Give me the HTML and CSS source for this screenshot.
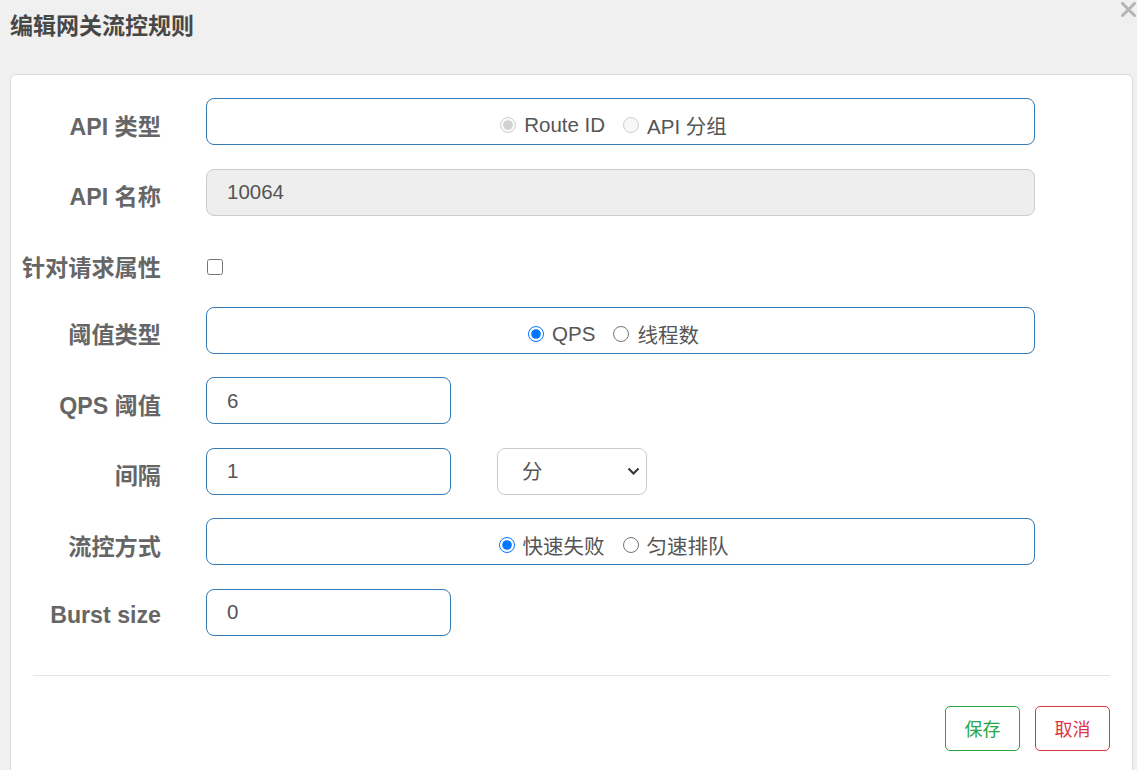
FILE: index.html
```html
<!DOCTYPE html>
<html lang="zh-CN">
<head>
<meta charset="utf-8">
<title>编辑网关流控规则</title>
<link rel="stylesheet" href="styles.css">
</head>
<body>
<div class="header">
  <h1 class="title">编辑网关流控规则</h1>
  <button class="close" type="button" aria-label="关闭">
    <svg width="15" height="15" viewBox="0 0 15 15"><path d="M1.5 1.5 L13.5 13.5 M13.5 1.5 L1.5 13.5" stroke="#b5b5b5" stroke-width="3" stroke-linecap="square"/></svg>
  </button>
</div>
<div class="card">
  <form class="form">
    <label class="lbl">API 类型</label>
    <div class="box radios">
      <label class="opt disabled"><input type="radio" name="apiType" checked disabled><span>Route ID</span></label>
      <label class="opt disabled"><input type="radio" name="apiType" disabled><span>API 分组</span></label>
    </div>

    <label class="lbl">API 名称</label>
    <input class="box input disabled-input" type="text" value="10064" disabled>

    <label class="lbl lbl-check">针对请求属性</label>
    <div class="check-wrap"><input class="check" type="checkbox"></div>

    <label class="lbl">阈值类型</label>
    <div class="box radios">
      <label class="opt"><input type="radio" name="grade" checked><span>QPS</span></label>
      <label class="opt"><input type="radio" name="grade"><span>线程数</span></label>
    </div>

    <label class="lbl">QPS 阈值</label>
    <div class="line"><input class="box input short" type="text" value="6"></div>

    <label class="lbl">间隔</label>
    <div class="line">
      <input class="box input short" type="text" value="1">
      <div class="select-wrap">
        <select class="select">
          <option>秒</option>
          <option selected>分</option>
          <option>时</option>
          <option>天</option>
        </select>
        <svg class="chev" width="13" height="9" viewBox="0 0 13 9"><path d="M1.5 1.5 L6.5 6.5 L11.5 1.5" fill="none" stroke="#333" stroke-width="2"/></svg>
      </div>
    </div>

    <label class="lbl">流控方式</label>
    <div class="box radios">
      <label class="opt"><input type="radio" name="behavior" checked><span>快速失败</span></label>
      <label class="opt"><input type="radio" name="behavior"><span>匀速排队</span></label>
    </div>

    <label class="lbl">Burst size</label>
    <div class="line"><input class="box input short" type="text" value="0"></div>
  </form>
  <div class="footer">
    <button class="btn btn-save" type="button">保存</button>
    <button class="btn btn-cancel" type="button">取消</button>
  </div>
</div>
</body>
</html>
```

FILE: styles.css
```css
html, body {
  margin: 0;
  padding: 0;
  background: #f0f0f0;
  height: 770px;
  overflow: hidden;
  font-family: "Liberation Sans", "Noto Sans CJK SC", sans-serif;
}

.header {
  height: 74px;
  display: flex;
  justify-content: space-between;
  align-items: flex-start;
  padding-left: 10px;
  box-sizing: border-box;
}

.title {
  margin: 11px 0 0;
  font-size: 23px;
  line-height: 30px;
  font-weight: bold;
  color: #474747;
}

.close {
  margin: 2px 1px 0 0;
  padding: 0;
  border: 0;
  background: none;
  width: 15px;
  height: 15px;
  display: flex;
}

.card {
  margin-left: 10px;
  width: 1123px;
  height: 760px;
  box-sizing: border-box;
  background: #fff;
  border: 1px solid #dcdcdc;
  border-radius: 6px;
}

.form {
  display: grid;
  grid-template-columns: 150px 829px;
  column-gap: 45px;
  row-gap: 23.5px;
  padding-top: 23px;
  align-items: center;
}

.lbl {
  text-align: right;
  font-size: 23.2px;
  font-weight: bold;
  color: #666;
  padding-top: 6px;
  white-space: nowrap;
}

.lbl-check {
  padding-top: 10px;
}

.box {
  box-sizing: border-box;
  height: 47px;
  border: 1px solid #337ab7;
  border-radius: 8px;
  background: #fff;
  font-family: inherit;
  font-size: 20.5px;
  color: #555;
}

.radios {
  display: flex;
  justify-content: center;
  align-items: center;
  gap: 18px;
  padding-top: 7px;
  padding-right: 14px;
}

.opt {
  display: flex;
  align-items: center;
  gap: 8px;
  color: #555;
}

.opt input {
  width: 16px;
  height: 16px;
  margin: 0;
}

.opt.disabled span {
  color: #555;
}

.input {
  width: 100%;
  padding: 0 20px;
  outline: none;
}

.disabled-input {
  background: #eee;
  border-color: #ccc;
}

.check-wrap {
  height: 44px;
  display: flex;
  align-items: center;
  padding-top: 12px;
  box-sizing: border-box;
}

.check {
  width: 16px;
  height: 16px;
  margin: 0 0 0 1px;
}

.line {
  display: flex;
  align-items: center;
  gap: 46px;
}

.short {
  width: 245px;
}

.select-wrap {
  position: relative;
  width: 150px;
  height: 47px;
}

.select {
  appearance: none;
  -webkit-appearance: none;
  width: 150px;
  height: 47px;
  box-sizing: border-box;
  border: 1px solid #ccc;
  border-radius: 8px;
  background: #fff;
  padding: 0 0 0 24px;
  font-family: inherit;
  font-size: 20.5px;
  color: #555;
  outline: none;
}

.chev {
  position: absolute;
  right: 7px;
  top: 19px;
  pointer-events: none;
}

.footer {
  margin: 39px 22px 0;
  border-top: 1px solid #e5e5e5;
  padding-top: 30px;
  display: flex;
  justify-content: flex-end;
  gap: 15px;
}

.btn {
  width: 75px;
  height: 45px;
  box-sizing: border-box;
  background: #fff;
  border: 1px solid;
  border-radius: 5px;
  font-family: inherit;
  font-size: 18px;
  padding: 0;
}

.btn-save {
  color: #28a745;
  border-color: #28a745;
}

.btn-cancel {
  color: #dc3545;
  border-color: #dc3545;
}
```
